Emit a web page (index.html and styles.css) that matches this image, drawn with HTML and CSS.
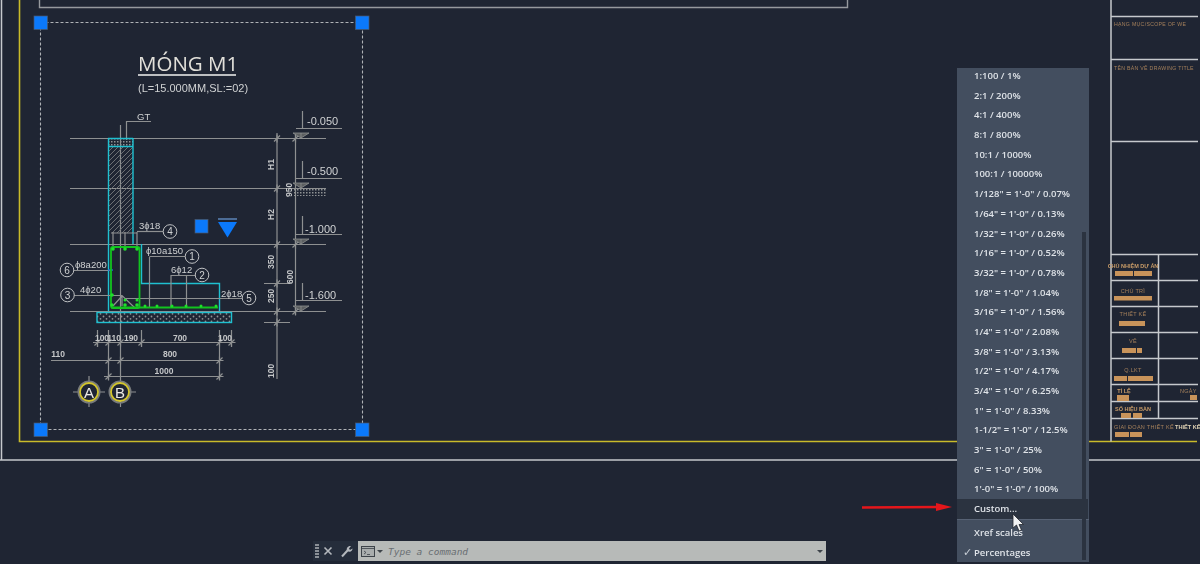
FILE: index.html
```html
<!DOCTYPE html>
<html lang="vi">
<head>
  <meta charset="UTF-8">
  <meta name="viewport" content="width=device-width, initial-scale=1.0">
  <title>AutoCAD - Annotation Scale</title>
  <link rel="stylesheet" href="styles.css">
</head>
<body>
  <div class="workspace">
    <svg class="drawing" width="1200" height="564" viewBox="0 0 1200 564" xmlns="http://www.w3.org/2000/svg">
      <defs>
        <pattern id="hatch" width="5" height="5" patternUnits="userSpaceOnUse">
          <path d="M-1 6L6 -1M-1 1L1 -1M4 6L6 4" class="hatch-line"/>
        </pattern>
        <pattern id="dots" width="6" height="5" patternUnits="userSpaceOnUse">
          <circle cx="1.5" cy="1.5" r="0.9" class="dot"/>
          <circle cx="4.5" cy="3.8" r="0.9" class="dot"/>
        </pattern>
        <pattern id="ground" width="3" height="3" patternUnits="userSpaceOnUse">
          <rect width="1.5" height="1.5" class="dot"/>
        </pattern>
        <g id="tick"><path d="M-3 3L3 -3M-4 0H4M0 -4V4" class="line"/></g>
        <g id="level"><path d="M-8 0H8L0 5ZM0 0V5" class="level"/></g>
      </defs>

      <!-- sheet frames -->
      <path d="M1.5 0V460" class="sheet"/>
      <path d="M0 460H1200" class="sheet"/>
      <path d="M19.5 0V441.5H1197" class="yellow"/>
      <path d="M39.5 0V7.5H847.5V0" class="frame"/>

      <!-- title block -->
      <path d="M1111 0V441.5M1111 16.5H1198M1111 59.5H1198M1111 141.5H1198M1111 254.5H1198M1111 280.5H1198M1111 306.5H1198M1111 332.5H1198M1111 358.5H1198M1111 384.5H1198M1111 401.5H1198M1111 418.5H1198M1158.5 254.5V418.5" class="sheet"/>
      <text x="1114" y="26" class="tb tb-small">HẠNG MỤC/SCOPE OF WE</text>
      <text x="1114" y="70" class="tb tb-small">TÊN BẢN VẼ DRAWING TITLE</text>
      <text x="1133" y="268" class="tb tb-bold" text-anchor="middle">CHỦ NHIỆM DỰ ÁN</text>
      <text x="1133" y="293" class="tb" text-anchor="middle">CHỦ TRÌ</text>
      <text x="1133" y="316" class="tb" text-anchor="middle">THIẾT KẾ</text>
      <text x="1133" y="343" class="tb" text-anchor="middle">VẼ</text>
      <text x="1133" y="372" class="tb" text-anchor="middle">Q.LKT</text>
      <text x="1124" y="393" class="tb tb-bold" text-anchor="middle">TỈ LỆ</text>
      <text x="1180" y="393" class="tb">NGÀY</text>
      <text x="1133" y="411" class="tb tb-bold" text-anchor="middle">SỐ HIỆU BẢN</text>
      <text x="1114" y="429" class="tb">GIAI ĐOẠN THIẾT KẾ</text>
      <text x="1175" y="429" class="tb-value">THIẾT KẾ</text>
      <g class="blob">
        <rect x="1115" y="271" width="18" height="5"/><rect x="1134" y="271" width="18" height="5"/>
        <rect x="1114" y="296" width="38" height="4.5"/>
        <rect x="1119" y="321" width="26" height="5"/>
        <rect x="1122" y="348" width="14" height="5"/><rect x="1137" y="348" width="5" height="5"/>
        <rect x="1114" y="376" width="13" height="5"/><rect x="1128" y="376" width="25" height="5"/>
        <rect x="1117" y="395" width="12" height="6"/>
        <rect x="1190" y="395" width="7" height="5"/>
        <rect x="1121" y="413" width="10" height="5"/><rect x="1133" y="413" width="9" height="5"/>
        <rect x="1115" y="432" width="14" height="5"/><rect x="1130" y="432" width="12" height="5"/>
      </g>

      <!-- selection window -->
      <rect x="40.5" y="22.5" width="322" height="407" class="dashed"/>

      <!-- heading -->
      <text x="138" y="71" class="heading">MÓNG M1</text>
      <path d="M138 75H236" class="heading-rule"/>
      <text x="138" y="92" class="subheading">(L=15.000MM,SL:=02)</text>

      <!-- level and axis lines -->
      <path d="M70 138.5H326M70 188.5H326M70 244.5H326M70 311.5H326" class="line"/>
      <path d="M120.5 125V385" class="line"/>
      <path d="M126.5 140V121.5H151" class="line"/>
      <text x="137" y="120" class="label">GT</text>

      <!-- wall and footing -->
      <rect x="108" y="146" width="25" height="87" fill="url(#hatch)"/>
      <rect x="108" y="139" width="25" height="7" fill="url(#ground)"/>
      <path d="M108 138.5H133M108 146.5H133M108.5 138V311M133 138V244M141.5 244V283.5H219.5V311" class="cyan"/>
      <rect x="97" y="312.5" width="134.500" height="10" class="lean" fill="url(#dots)"/>
      <path d="M111 233H137M113 232V246M125 232V246M137 232V246" class="line"/>

      <!-- leaders -->
      <path d="M149.500 257V307M149.500 256.500H185" class="line"/>
      <path d="M171 307V275.500H195M186.500 275.500V307" class="line"/>
      <path d="M74 270.500H110" class="line"/>
      <path d="M74 295.500H122L135 308M125 298.500H242M122 296L113 306M122 296V306" class="line"/>
      <path d="M108 270H113" class="blue-tick"/>

      <!-- rebar -->
      <rect x="111" y="247" width="28.500" height="61" rx="2" class="green"/>
      <path d="M111 307.500H218" class="green"/>
      <g class="green-dot">
        <circle cx="113" cy="249" r="1.800"/><circle cx="125" cy="249" r="1.800"/><circle cx="137" cy="249" r="1.800"/>
        <circle cx="112" cy="295" r="1.800"/><circle cx="112" cy="305" r="1.800"/><circle cx="125" cy="305" r="1.800"/><circle cx="137" cy="305" r="1.800"/><circle cx="125" cy="300" r="1.500"/><circle cx="137" cy="300" r="1.500"/>
        <circle cx="145" cy="306" r="1.500"/><circle cx="157" cy="306" r="1.500"/><circle cx="172" cy="306" r="1.500"/><circle cx="186" cy="306" r="1.500"/><circle cx="201" cy="306" r="1.500"/><circle cx="216" cy="306" r="1.500"/>
      </g>

      <!-- rebar callouts -->
      <text x="139" y="229" class="label">3ϕ18</text>
      <text x="146" y="254" class="label">ϕ10a150</text>
      <text x="171" y="273" class="label">6ϕ12</text>
      <text x="75" y="268" class="label">ϕ8a200</text>
      <text x="80" y="293" class="label">4ϕ20</text>
      <text x="221" y="297" class="label">2ϕ18</text>
      <path d="M163 231.500H137" class="line"/>
      <g class="bubble">
        <circle cx="170" cy="231.500" r="6.800"/><circle cx="192" cy="256.500" r="6.800"/><circle cx="202" cy="275" r="6.800"/>
        <circle cx="67" cy="270" r="6.800"/><circle cx="67.500" cy="295" r="6.800"/><circle cx="249" cy="298" r="6.800"/>
      </g>
      <text x="170" y="235" class="bubble-text">4</text>
      <text x="192" y="260" class="bubble-text">1</text>
      <text x="202" y="278.500" class="bubble-text">2</text>
      <text x="67" y="273.500" class="bubble-text">6</text>
      <text x="67.500" y="298.500" class="bubble-text">3</text>
      <text x="249" y="301.500" class="bubble-text">5</text>

      <!-- dimensions on the right -->
      <path d="M277 133V379M295.500 133V315" class="line"/>
      <use href="#tick" x="277" y="138.500"/><use href="#tick" x="277" y="188.500"/><use href="#tick" x="277" y="244.500"/><use href="#tick" x="277" y="283.500"/><use href="#tick" x="277" y="311.500"/><use href="#tick" x="277" y="322.500"/>
      <use href="#tick" x="295.500" y="138.500"/><use href="#tick" x="295.500" y="244.500"/><use href="#tick" x="295.500" y="311.500"/>
      <path d="M264 283.500H290M264 322.500H290" class="line"/>
      <text transform="translate(274 170) rotate(-90)" class="dim">H1</text>
      <text transform="translate(274 220) rotate(-90)" class="dim">H2</text>
      <text transform="translate(292 197) rotate(-90)" class="dim">950</text>
      <text transform="translate(274 269) rotate(-90)" class="dim">350</text>
      <text transform="translate(274 303) rotate(-90)" class="dim">250</text>
      <text transform="translate(293 284) rotate(-90)" class="dim">600</text>
      <text transform="translate(274 378) rotate(-90)" class="dim">100</text>
      <rect x="294" y="189" width="32" height="7" fill="url(#ground)"/>

      <!-- levels -->
      <path d="M302.500 111V128.500M296 128.500H342M302.500 161V178.500M296 178.500H342M302.500 216V234.500M296 234.500H342M302.500 283V300.500M296 300.500H342" class="line"/>
      <use href="#level" x="301" y="133"/><use href="#level" x="301" y="183"/><use href="#level" x="301" y="239"/><use href="#level" x="301" y="306"/>
      <text x="307" y="125" class="level-text">-0.050</text>
      <text x="307" y="175" class="level-text">-0.500</text>
      <text x="305" y="233" class="level-text">-1.000</text>
      <text x="305" y="299" class="level-text">-1.600</text>

      <!-- dimensions underneath -->
      <path d="M93 342.500H235M51 360.500H223M104 376.500H223M97.500 330V347M108.500 330V380M141.500 330V347M219.500 330V380M231.500 330V347" class="line"/>
      <use href="#tick" x="97.500" y="342.500"/><use href="#tick" x="108.500" y="342.500"/><use href="#tick" x="120.500" y="342.500"/><use href="#tick" x="141.500" y="342.500"/><use href="#tick" x="219.500" y="342.500"/><use href="#tick" x="231.500" y="342.500"/>
      <use href="#tick" x="108.500" y="360.500"/><use href="#tick" x="120.500" y="360.500"/><use href="#tick" x="219.500" y="360.500"/>
      <use href="#tick" x="108.500" y="376.500"/><use href="#tick" x="219.500" y="376.500"/>
      <text x="102" y="341" class="dim dim-mid">100</text>
      <text x="114" y="341" class="dim dim-mid">110</text>
      <text x="131" y="341" class="dim dim-mid">190</text>
      <text x="180" y="341" class="dim dim-mid">700</text>
      <text x="225" y="341" class="dim dim-mid">100</text>
      <text x="58" y="357" class="dim dim-mid">110</text>
      <text x="170" y="357" class="dim dim-mid">800</text>
      <text x="164" y="374" class="dim dim-mid">1000</text>

      <!-- grid axes -->
      <path d="M73 392H105M89 376V407M110 392H136M120.500 385V407" class="line"/>
      <circle cx="89" cy="392" r="10.500" class="axis-ring"/>
      <circle cx="120" cy="392" r="10.500" class="axis-ring"/>
      <circle cx="89" cy="392" r="9" class="axis"/>
      <circle cx="120" cy="392" r="9" class="axis"/>
      <text x="89" y="397.500" class="axis-text">A</text>
      <text x="120" y="397.500" class="axis-text">B</text>

      <!-- grips -->
      <rect x="34" y="16" width="13.500" height="13.500" class="grip"/>
      <rect x="355.500" y="16" width="13.500" height="13.500" class="grip"/>
      <rect x="34" y="423" width="13.500" height="13.500" class="grip"/>
      <rect x="355.500" y="423" width="13.500" height="13.500" class="grip"/>
      <rect x="195" y="219.500" width="13" height="13.500" class="grip"/>
      <path d="M218 219H237" class="grip-bar"/>
      <path d="M218 222H237L227.500 237.500Z" class="grip-arrow"/>

      <!-- red arrow -->
      <path d="M862 507.500L938 507" class="arrow-line"/>
      <path d="M936 503L952 507L936 511Z" class="arrow-head"/>
    </svg>

    <div class="scale-menu">
      <ul class="scale-list">
        <li>1:100 / 1%</li>
        <li>2:1 / 200%</li>
        <li>4:1 / 400%</li>
        <li>8:1 / 800%</li>
        <li>10:1 / 1000%</li>
        <li>100:1 / 10000%</li>
        <li>1/128" = 1'-0" / 0.07%</li>
        <li>1/64" = 1'-0" / 0.13%</li>
        <li>1/32" = 1'-0" / 0.26%</li>
        <li>1/16" = 1'-0" / 0.52%</li>
        <li>3/32" = 1'-0" / 0.78%</li>
        <li>1/8" = 1'-0" / 1.04%</li>
        <li>3/16" = 1'-0" / 1.56%</li>
        <li>1/4" = 1'-0" / 2.08%</li>
        <li>3/8" = 1'-0" / 3.13%</li>
        <li>1/2" = 1'-0" / 4.17%</li>
        <li>3/4" = 1'-0" / 6.25%</li>
        <li>1" = 1'-0" / 8.33%</li>
        <li>1-1/2" = 1'-0" / 12.5%</li>
        <li>3" = 1'-0" / 25%</li>
        <li>6" = 1'-0" / 50%</li>
        <li>1'-0" = 1'-0" / 100%</li>
        <li class="active">Custom...</li>
        <li class="sep"></li>
        <li>Xref scales</li>
        <li class="checked">Percentages</li>
      </ul>
      <div class="scroll-thumb"></div>
    </div>

    <svg class="pointer" width="14" height="20" viewBox="0 0 14 20" xmlns="http://www.w3.org/2000/svg">
      <path d="M1 1V15L4.500 12L7 18L9.500 17L7 11.500H11.500Z" class="pointer-shape"/>
    </svg>

    <div class="command-bar">
      <div class="cmd-tools">
        <span class="grip-dots"></span>
        <svg class="cmd-icon" width="10" height="10" viewBox="0 0 10 10" xmlns="http://www.w3.org/2000/svg">
          <path d="M1.500 1.500L8.500 8.500M8.500 1.500L1.500 8.500" class="cmd-stroke"/>
        </svg>
        <svg class="cmd-icon cmd-wrench-icon" width="14" height="14" viewBox="0 0 14 14" xmlns="http://www.w3.org/2000/svg">
          <path d="M2 12.500L7.500 6.500" class="cmd-wrench-shaft"/>
          <path d="M7 7C6 4 8 1.500 11 2L9 4.500L10 6L12.500 4.500C12.500 7.500 10 8.500 7 7Z" class="cmd-wrench"/>
        </svg>
      </div>
      <div class="cmd-input">
        <svg class="cmd-prompt" width="14" height="11" viewBox="0 0 14 11" xmlns="http://www.w3.org/2000/svg">
          <rect x="0.500" y="0.500" width="13" height="10" class="prompt-box"/>
          <path d="M0.500 2.500H13.500M3 5L5 6.500L3 8M6 8.500H9" class="prompt-line"/>
        </svg>
        <span class="caret"></span>
        <span class="cmd-text">Type a command</span>
        <span class="caret caret-end"></span>
      </div>
    </div>
  </div>
</body>
</html>
```

FILE: styles.css
```css
html, body {
  margin: 0;
  padding: 0;
  height: 100%;
  overflow: hidden;
  background-color: #1f2533;
}
.workspace {
  position: relative;
  width: 1200px;
  height: 564px;
  overflow: hidden;
}
.drawing {
  position: absolute;
  left: 0;
  top: 0;
  filter: blur(0.4px);
}
.drawing .line { fill: none; stroke: #8e9091; stroke-width: 1.2; }
.sheet { fill: none; stroke: #c6c9cd; stroke-width: 1.5; }
.yellow { fill: none; stroke: #c9bb2a; stroke-width: 1.6; }
.frame { fill: none; stroke: #96999e; stroke-width: 1.4; }
.dashed { fill: none; stroke: #b0b3b7; stroke-width: 1.1; stroke-dasharray: 3 2; }
.hatch-line { fill: none; stroke: #75787a; stroke-width: 0.9; }
.dot { fill: #8e9193; }
.cyan { fill: none; stroke: #1fc0d0; stroke-width: 1.4; }
.lean { stroke: #1fc0d0; stroke-width: 1.4; }
.green { fill: none; stroke: #12c41e; stroke-width: 1.8; }
.green-dot circle { fill: #1ee02a; }
.blue-tick { stroke: #1c6ee0; stroke-width: 1.4; }
.level { fill: #5c5f61; stroke: #8e9091; stroke-width: 0.8; }
.bubble circle { fill: #1f2533; stroke: #c0c2c4; stroke-width: 1; }
.axis-ring { fill: none; stroke: #777a7c; stroke-width: 2; }
.axis { fill: #1f2533; stroke: #d4c62c; stroke-width: 1.8; }
.grip { fill: #0b79fb; stroke: #4b5a70; stroke-width: 0.7; }
.grip-bar { stroke: #4c6c96; stroke-width: 2; }
.grip-arrow { fill: #0b79fb; }
.arrow-line { fill: none; stroke: #e4161b; stroke-width: 2.6; }
.arrow-head { fill: #e4161b; }

.heading {
  font-family: "Open Sans", sans-serif;
  font-size: 20.5px;
  font-weight: 400;
  fill: #e2e0da;
}
.heading-rule { stroke: #bdbfc1; stroke-width: 2; }
.subheading, .label, .level-text {
  font-family: "Liberation Sans", sans-serif;
  font-size: 11px;
  fill: #d0d2d3;
}
.subheading { font-size: 11px; }
.label { font-size: 9.5px; }
.level-text { font-size: 11px; }
.dim {
  font-family: "Liberation Sans", sans-serif;
  font-size: 8.5px;
  font-weight: 700;
  fill: #c4c6c8;
}
.dim-mid { text-anchor: middle; }
.bubble-text {
  font-family: "Liberation Sans", sans-serif;
  font-size: 10px;
  fill: #d0d2d3;
  text-anchor: middle;
}
.axis-text {
  font-family: "Liberation Sans", sans-serif;
  font-size: 15px;
  fill: #eceae4;
  text-anchor: middle;
}
.tb {
  font-family: "Liberation Sans", sans-serif;
  font-size: 5.5px;
  letter-spacing: 0.3px;
  fill: #a5805b;
}
.tb-small { font-size: 5.2px; }
.tb-bold { font-weight: 700; letter-spacing: 0; fill: #c99c68; }
.tb-value {
  font-family: "Liberation Sans", sans-serif;
  font-size: 5.6px;
  font-weight: 700;
  fill: #e0d2b4;
}
.blob rect { fill: #c8935a; }

/* annotation scale menu */
.scale-menu {
  position: absolute;
  left: 957px;
  top: 68px;
  width: 132px;
  height: 494px;
  overflow: hidden;
  background-color: #434e5f;
  filter: blur(0.35px);
}
.scale-list {
  list-style: none;
  margin: -2px 0 0;
  padding: 0;
}
.scale-list li {
  position: relative;
  height: 19.7px;
  line-height: 19.7px;
  padding-left: 17px;
  font-family: "Open Sans", sans-serif;
  font-size: 9.5px;
  font-weight: 600;
  color: #dfe3e8;
  white-space: nowrap;
}
.scale-list .active {
  background-color: #2b3340;
  margin-right: 1px;
}
.scale-list .sep {
  height: 4.6px;
  box-shadow: inset 0 1px 0 #576274;
}
.scale-list .checked::before {
  content: "✓";
  position: absolute;
  left: 6px;
  font-family: "DejaVu Sans", sans-serif;
  font-size: 11px;
  color: #c8ced6;
}
.scroll-thumb {
  position: absolute;
  right: 3px;
  top: 164px;
  width: 4px;
  height: 328px;
  background-color: #2b3340;
}
.pointer {
  position: absolute;
  left: 1012px;
  top: 513px;
}
.pointer-shape { fill: #f1f2f3; stroke: #23272e; stroke-width: 0.8; }

/* command line */
.command-bar {
  position: absolute;
  left: 313px;
  top: 541px;
  width: 513px;
  height: 20px;
  display: flex;
}
.cmd-tools {
  width: 45px;
  display: flex;
  align-items: center;
  gap: 4px;
  padding-left: 2px;
  box-sizing: border-box;
  background-color: #252d3b;
}
.grip-dots {
  width: 4px;
  height: 15px;
  background-image: repeating-linear-gradient(to bottom, #8a8f96 0, #8a8f96 2px, transparent 2px, transparent 3px);
}
.cmd-icon { flex: none; }
.cmd-wrench-icon { margin-left: 3px; }
.cmd-stroke { fill: none; stroke: #b4b8bd; stroke-width: 1.6; }
.cmd-wrench { fill: #b4b8bd; }
.cmd-wrench-shaft { fill: none; stroke: #b4b8bd; stroke-width: 2; }
.cmd-input {
  flex: 1;
  display: flex;
  align-items: center;
  padding-left: 3px;
  background-color: #b7bab8;
}
.cmd-prompt { flex: none; }
.prompt-box { fill: #a9adad; stroke: #3d4349; stroke-width: 1; }
.prompt-line { fill: none; stroke: #3d4349; stroke-width: 0.8; }
.caret {
  flex: none;
  margin-left: 2px;
  border-left: 3px solid transparent;
  border-right: 3px solid transparent;
  border-top: 3px solid #3d4349;
}
.caret-end { margin-left: auto; margin-right: 3px; }
.cmd-text {
  margin-left: 5px;
  font-family: "DejaVu Sans Mono", monospace;
  font-size: 9.5px;
  font-style: italic;
  color: #6a6f73;
}
```
